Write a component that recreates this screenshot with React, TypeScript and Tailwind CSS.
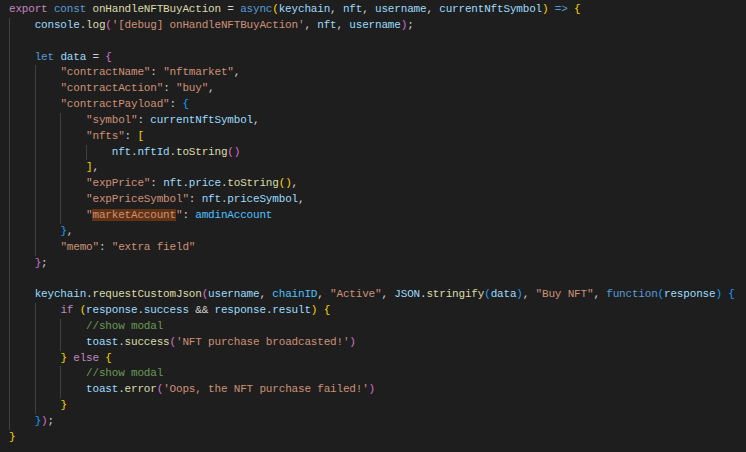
type Tok = [string, string];
type Line = { g: number; t: Tok[]; hl?: boolean };

const P = "text-[#d4d4d4]";
const KW = "text-[#c586c0]";
const BL = "text-[#569cd6]";
const FN = "text-[#dcdcaa]";
const VR = "text-[#9cdcfe]";
const CN = "text-[#4fc1ff]";
const ST = "text-[#ce9178]";
const CM = "text-[#6a9955]";
const B1 = "text-[#ffd700]";
const B2 = "text-[#da70d6]";
const B3 = "text-[#179fff]";
const HL = "text-[#ce9178] bg-[#613214]";

const lines: Line[] = [
  {
    g: 0,
    t: [
      ["export", KW], [" ", P], ["const", BL], [" ", P], ["onHandleNFTBuyAction", FN], [" = ", P],
      ["async", BL], ["(", B1], ["keychain", VR], [", ", P], ["nft", VR], [", ", P], ["username", VR],
      [", ", P], ["currentNftSymbol", VR], [")", B1], [" ", P], ["=>", BL], [" ", P], ["{", B1],
    ],
  },
  {
    g: 1,
    t: [
      ["console", VR], [".", P], ["log", FN], ["(", B2], ["'[debug] onHandleNFTBuyAction'", ST],
      [", ", P], ["nft", VR], [", ", P], ["username", VR], [")", B2], [";", P],
    ],
  },
  { g: 1, t: [] },
  { g: 1, t: [["let", BL], [" ", P], ["data", VR], [" = ", P], ["{", B2]] },
  { g: 2, t: [['"contractName"', ST], [": ", P], ['"nftmarket"', ST], [",", P]] },
  { g: 2, t: [['"contractAction"', ST], [": ", P], ['"buy"', ST], [",", P]] },
  { g: 2, t: [['"contractPayload"', ST], [": ", P], ["{", B3]] },
  { g: 3, t: [['"symbol"', ST], [": ", P], ["currentNftSymbol", VR], [",", P]] },
  { g: 3, t: [['"nfts"', ST], [": ", P], ["[", B1]] },
  { g: 4, t: [["nft", VR], [".", P], ["nftId", VR], [".", P], ["toString", FN], ["()", B2]] },
  { g: 3, t: [["]", B1], [",", P]] },
  {
    g: 3,
    t: [
      ['"expPrice"', ST], [": ", P], ["nft", VR], [".", P], ["price", VR], [".", P],
      ["toString", FN], ["()", B1], [",", P],
    ],
  },
  { g: 3, t: [['"expPriceSymbol"', ST], [": ", P], ["nft", VR], [".", P], ["priceSymbol", VR], [",", P]] },
  { g: 3, t: [['"', ST], ["marketAccount", HL], ['"', ST], [": ", P], ["amdinAccount", CN]] },
  { g: 2, t: [["}", B3], [",", P]] },
  { g: 2, t: [['"memo"', ST], [": ", P], ['"extra field"', ST]] },
  { g: 1, t: [["}", B2], [";", P]] },
  { g: 1, t: [] },
  {
    g: 1,
    t: [
      ["keychain", VR], [".", P], ["requestCustomJson", FN], ["(", B2], ["username", VR], [", ", P],
      ["chainID", CN], [", ", P], ['"Active"', ST], [", ", P], ["JSON", VR], [".", P],
      ["stringify", FN], ["(", B3], ["data", VR], [")", B3], [", ", P], ['"Buy NFT"', ST], [", ", P],
      ["function", BL], ["(", B3], ["response", VR], [")", B3], [" ", P], ["{", B3],
    ],
  },
  {
    g: 2,
    t: [
      ["if", KW], [" ", P], ["(", B1], ["response", VR], [".", P], ["success", VR], [" && ", P],
      ["response", VR], [".", P], ["result", VR], [")", B1], [" ", P], ["{", B1],
    ],
  },
  { g: 3, t: [["//show modal", CM]] },
  { g: 3, t: [["toast", VR], [".", P], ["success", FN], ["(", B2], ["'NFT purchase broadcasted!'", ST], [")", B2]] },
  { g: 2, t: [["}", B1], [" ", P], ["else", KW], [" ", P], ["{", B1]] },
  { g: 3, t: [["//show modal", CM]] },
  { g: 3, t: [["toast", VR], [".", P], ["error", FN], ["(", B2], ["'Oops, the NFT purchase failed!'", ST], [")", B2]] },
  { g: 2, t: [["}", B1]] },
  { g: 1, t: [["}", B3], [")", B2], [";", P]] },
  { g: 0, t: [["}", B1]] },
];

export default function App() {
  return (
    <div
      className="w-[746px] h-[452px] overflow-hidden bg-[#1e1e1e] pl-[9px] pt-[2px] text-[11px] tracking-[-0.18px] text-[#d4d4d4]"
      style={{ fontFamily: '"Liberation Mono", "DejaVu Sans Mono", monospace' }}
    >
      {lines.map((line, i) => (
        <div key={i} className="flex h-[15.85px] leading-[15.85px] whitespace-pre">
          {Array.from({ length: line.g }).map((_, j) => (
            <span key={j} className="whitespace-pre shadow-[inset_1px_0_0_#404040]">
              {"    "}
            </span>
          ))}
          <span className="whitespace-pre">
            {line.t.map(([text, cls], k) => (
              <span key={k} className={cls}>
                {text}
              </span>
            ))}
          </span>
        </div>
      ))}
    </div>
  );
}
